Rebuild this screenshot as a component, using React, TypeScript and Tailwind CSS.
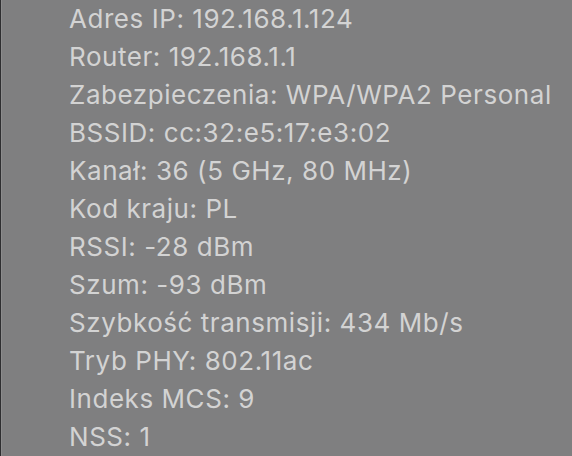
const rows = [
  'Adres IP: 192.168.1.124',
  'Router: 192.168.1.1',
  'Zabezpieczenia: WPA/WPA2 Personal',
  'BSSID: cc:32:e5:17:e3:02',
  'Kanał: 36 (5 GHz, 80 MHz)',
  'Kod kraju: PL',
  'RSSI: -28 dBm',
  'Szum: -93 dBm',
  'Szybkość transmisji: 434 Mb/s',
  'Tryb PHY: 802.11ac',
  'Indeks MCS: 9',
  'NSS: 1',
];

export default function App() {
  return (
    <div className="w-[572px] h-[456px] overflow-hidden flex bg-[#7f7f80]">
      <div className="w-[1px] bg-[#2e2e30]" />
      <div className="w-[1px] bg-[#8c8c8d]" />
      <div
        className="flex-1 pl-[67px] pt-0 flex flex-col text-[26px] leading-[38px] text-[#d3d3d3] tracking-[0.55px]"
        style={{ fontFamily: 'Inter, "Noto Sans", sans-serif' }}
      >
        {rows.map((r) => (
          <div key={r} className="whitespace-nowrap">{r}</div>
        ))}
      </div>
    </div>
  );
}
